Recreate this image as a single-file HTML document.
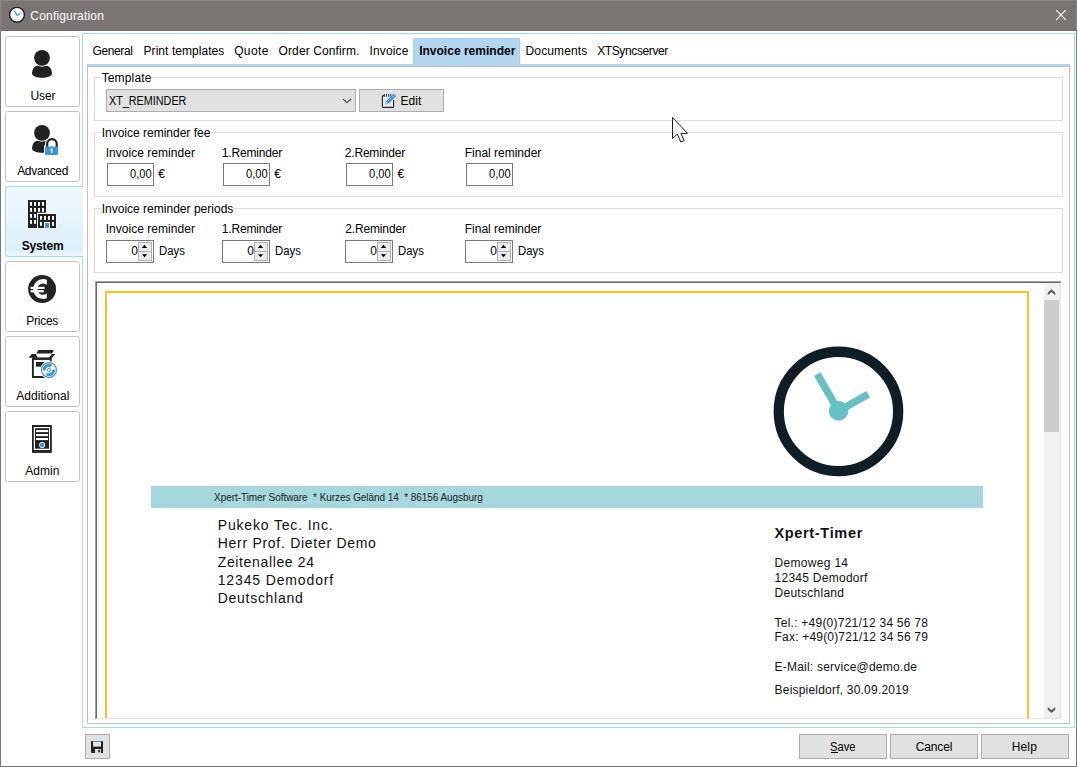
<!DOCTYPE html>
<html><head><meta charset="utf-8"><title>Configuration</title>
<style>
html,body{margin:0;padding:0;}
body{width:1077px;height:767px;overflow:hidden;background:#fff;position:relative;font-family:"Liberation Sans", sans-serif;}
.a{position:absolute;box-sizing:border-box;}
.t{position:absolute;white-space:pre;font-family:"Liberation Sans", sans-serif;}
.sb{position:absolute;box-sizing:border-box;left:5px;width:75px;height:71px;border:1px solid #c4c4c4;border-radius:2.5px;background:#fff;}
.gb{position:absolute;box-sizing:border-box;border:1px solid #dcdcdc;}
.btn{position:absolute;box-sizing:border-box;background:#e1e1e1;border:1px solid #adadad;}
.inp{position:absolute;box-sizing:border-box;background:#fff;border:1px solid #7a7a7a;}
.spb{position:absolute;box-sizing:border-box;background:#ebebeb;border:1px solid #b2b2b2;}
svg{position:absolute;overflow:visible;}
</style></head>
<body>
<div class="a" style="left:0;top:0;width:1077px;height:31px;background:#7a7473;"></div>
<div class="a" style="left:0;top:30px;width:1077px;height:1px;background:#6f6968;"></div>
<div class="a" style="left:0;top:0;width:1px;height:767px;background:#7d7877;"></div>
<div class="a" style="left:1076px;top:0;width:1px;height:767px;background:#7d7877;"></div>
<div class="a" style="left:0;top:766px;width:1077px;height:1px;background:#7d7877;"></div>
<div class="a" style="left:0;top:0;width:1077px;height:1px;background:#898483;"></div>
<div class="a" style="left:0;top:0;width:1px;height:31px;background:#898483;"></div>
<div class="a" style="left:1076px;top:0;width:1px;height:31px;background:#898483;"></div>
<svg style="left:0;top:0" width="40" height="31" viewBox="0 0 40 31">
<circle cx="17" cy="14.8" r="7.4" fill="#fff" stroke="#13242b" stroke-width="1.4"/>
<path d="M14.3 10.6 L16.9 15.4 L20.6 13.4" fill="none" stroke="#3fb2b5" stroke-width="1.3"/>
</svg>
<svg style="left:1051px;top:5px" width="20" height="20" viewBox="0 0 20 20">
<path d="M5.2 5.2 L14.8 14.8 M14.8 5.2 L5.2 14.8" stroke="#fff" stroke-width="1.15" fill="none"/></svg>
<div class="a" style="left:82px;top:33px;width:993px;height:695px;border:1px solid #9bdcfb;"></div>
<div class="a" style="left:87px;top:66px;width:983px;height:658px;border:1px solid #bfbfbf;"></div>
<div class="a" style="left:87px;top:64px;width:983px;height:2px;background:#b2d6f0;"></div>
<div class="a" style="left:413px;top:38px;width:107px;height:27px;background:#b2d6f0;border:1px solid #a9d1ee;border-bottom:none;"></div>
<div class="sb" style="top:36px;"></div>
<div class="sb" style="top:111px;"></div>
<div class="a" style="left:5px;top:186px;width:78px;height:71px;border:1px solid #9bdcfb;border-right:none;border-radius:3px 0 0 3px;background:linear-gradient(#eef8fe 0%,#e6f4fd 45%,#dbeffb 92%,#e8f5fd 96%);box-shadow:inset 1px 1px 0 rgba(255,255,255,.7), inset 0 -1px 0 rgba(255,255,255,.3);"></div>
<div class="sb" style="top:261px;"></div>
<div class="sb" style="top:336px;"></div>
<div class="sb" style="top:411px;"></div>
<div class="gb" style="left:94px;top:77px;width:969px;height:44px;"></div>
<div class="a" style="left:101px;top:77px;width:51px;height:1px;background:#fff;"></div>
<div class="gb" style="left:94px;top:132px;width:969px;height:65px;"></div>
<div class="a" style="left:101px;top:132px;width:110px;height:1px;background:#fff;"></div>
<div class="gb" style="left:94px;top:208px;width:969px;height:65px;"></div>
<div class="a" style="left:101px;top:208px;width:133px;height:1px;background:#fff;"></div>
<div class="btn" style="left:106px;top:89px;width:250px;height:23px;"></div>
<svg style="left:340px;top:94px" width="14" height="12" viewBox="0 0 14 12"><path d="M3 5 L7 8.6 L11 5" fill="none" stroke="#404040" stroke-width="1.15"/></svg>
<div class="btn" style="left:359px;top:89px;width:85px;height:23px;"></div>
<div class="inp" style="left:107px;top:163px;width:47px;height:23px;"></div>
<div class="inp" style="left:223px;top:163px;width:47px;height:23px;"></div>
<div class="inp" style="left:346px;top:163px;width:47px;height:23px;"></div>
<div class="inp" style="left:466px;top:163px;width:47px;height:23px;"></div>
<div class="inp" style="left:106px;top:240px;width:48px;height:23px;"></div>
<div class="spb" style="left:138px;top:242px;width:14px;height:10px;"></div>
<div class="spb" style="left:138px;top:251px;width:14px;height:10px;"></div>
<svg style="left:138px;top:242px" width="14" height="19" viewBox="0 0 14 19"><path d="M3.9 5.9 L6.5 2.8 L9.1 5.9 Z M3.9 12.2 L6.5 15.3 L9.1 12.2 Z" fill="#000"/></svg>
<div class="inp" style="left:222px;top:240px;width:48px;height:23px;"></div>
<div class="spb" style="left:254px;top:242px;width:14px;height:10px;"></div>
<div class="spb" style="left:254px;top:251px;width:14px;height:10px;"></div>
<svg style="left:254px;top:242px" width="14" height="19" viewBox="0 0 14 19"><path d="M3.9 5.9 L6.5 2.8 L9.1 5.9 Z M3.9 12.2 L6.5 15.3 L9.1 12.2 Z" fill="#000"/></svg>
<div class="inp" style="left:345px;top:240px;width:48px;height:23px;"></div>
<div class="spb" style="left:377px;top:242px;width:14px;height:10px;"></div>
<div class="spb" style="left:377px;top:251px;width:14px;height:10px;"></div>
<svg style="left:377px;top:242px" width="14" height="19" viewBox="0 0 14 19"><path d="M3.9 5.9 L6.5 2.8 L9.1 5.9 Z M3.9 12.2 L6.5 15.3 L9.1 12.2 Z" fill="#000"/></svg>
<div class="inp" style="left:465px;top:240px;width:48px;height:23px;"></div>
<div class="spb" style="left:497px;top:242px;width:14px;height:10px;"></div>
<div class="spb" style="left:497px;top:251px;width:14px;height:10px;"></div>
<svg style="left:497px;top:242px" width="14" height="19" viewBox="0 0 14 19"><path d="M3.9 5.9 L6.5 2.8 L9.1 5.9 Z M3.9 12.2 L6.5 15.3 L9.1 12.2 Z" fill="#000"/></svg>
<div class="a" style="left:95px;top:281px;width:966px;height:438px;background:#fff;border-top:2px solid #696969;border-left:2px solid #696969;border-right:1px solid #e3e3e3;border-bottom:1px solid #e3e3e3;"></div>
<div class="a" style="left:95px;top:281px;width:965px;height:1px;background:#a0a0a0;"></div>
<div class="a" style="left:95px;top:281px;width:1px;height:437px;background:#a0a0a0;"></div>
<div class="a" style="left:105px;top:291px;width:924px;height:427px;border:2px solid #ffc125;border-bottom:none;"></div>
<div class="a" style="left:1044px;top:283px;width:16px;height:435px;background:#f0f0f0;"></div>
<div class="a" style="left:1044px;top:300px;width:15px;height:132px;background:#cdcdcd;"></div>
<svg style="left:0;top:0" width="1077" height="767" viewBox="0 0 1077 767">
<path d="M1047.8 295.2 L1051.5 292 L1055.2 295.2 V292.4 L1051.5 289.2 L1047.8 292.4 Z" fill="#5a5a5a"/>
<path d="M1047.8 707 L1051.5 710.3 L1055.2 707 V709.8 L1051.5 713 L1047.8 709.8 Z" fill="#5a5a5a"/>
</svg>
<div class="a" style="left:151px;top:486px;width:832px;height:22px;background:#a5d7de;"></div>
<svg style="left:760px;top:335px" width="160" height="150" viewBox="760 335 160 150">
<circle cx="838.45" cy="411.45" r="59.7" fill="#fff" stroke="#0f1e26" stroke-width="10.3"/>
<path d="M838.6 410.9 L817.3 374.1" stroke="#66c1c4" stroke-width="7.5" fill="none"/>
<path d="M838.6 410.9 L868.2 394.3" stroke="#66c1c4" stroke-width="7.5" fill="none"/>
<circle cx="838.6" cy="410.9" r="9.8" fill="#66c1c4"/>
</svg>
<div class="btn" style="left:85px;top:734px;width:25px;height:25px;"></div>
<div class="btn" style="left:799px;top:734px;width:88px;height:25px;"></div>
<div class="btn" style="left:890px;top:734px;width:88px;height:25px;"></div>
<div class="btn" style="left:981px;top:734px;width:88px;height:25px;"></div>
<div class="a" style="left:831px;top:752px;width:7px;height:1px;background:#000;"></div>
<svg style="left:0;top:0" width="1077" height="767" viewBox="0 0 1077 767">
<!-- User icon -->
<g id="user">
<path d="M36.8 65.8 L47.2 65.8 C50 66.6 52 70 52 73.6 C52 76.6 46 77.8 42 77.8 C38 77.8 32 76.6 32 73.6 C32 70 34 66.6 36.8 65.8 Z" fill="#222"/>
<circle cx="42" cy="57.8" r="8.9" fill="#fff"/>
<circle cx="42" cy="57.8" r="7.9" fill="#222"/>
</g>
<!-- Advanced icon -->
<g id="adv">
<path d="M36.8 140.8 L47.2 140.8 C50 141.6 52 145 52 148.6 C52 151.6 46 152.8 42 152.8 C38 152.8 32 151.6 32 148.6 C32 145 34 141.6 36.8 140.8 Z" fill="#222"/>
<path d="M47.2 148 V143.8 A4.75 4.75 0 0 1 56.7 143.8 V148" fill="#fff" stroke="#fff" stroke-width="4.4"/>
<rect x="44" y="145.4" width="15.2" height="10.6" fill="#fff"/>
<circle cx="42" cy="132.8" r="8.9" fill="#fff"/>
<circle cx="42" cy="132.8" r="7.9" fill="#222"/>
<path d="M47.2 147 V143.8 A4.75 4.75 0 0 1 56.7 143.8 V147" fill="none" stroke="#222" stroke-width="2.2"/>
<rect x="45.1" y="146.5" width="12.9" height="8.4" rx="0.8" fill="#3b97d3"/>
<circle cx="51.6" cy="149.4" r="1" fill="#fff"/>
<rect x="50.9" y="149.4" width="1.4" height="3.6" fill="#fff"/>
</g>
<!-- System icon -->
<g id="sys">
<path d="M27.3 199.3 H46.8 V213.3 H56.7 V228.7 H27.3 Z" fill="#f4fafe"/>
<path d="M28 200 H46 V212.8 H37 V228 H28 Z" fill="#222"/>
<path d="M38 214 H56 V228 H50 V222 H44 V228 H38 Z" fill="#222"/>
<g fill="#fff">
<rect x="30" y="202" width="2" height="3.8"/><rect x="34" y="202" width="2" height="3.8"/><rect x="38" y="202" width="2" height="3.8"/><rect x="42" y="202" width="2" height="3.8"/>
<rect x="30" y="208" width="2" height="3.8"/><rect x="34" y="208" width="2" height="3.8"/><rect x="38" y="208" width="2" height="3.8"/><rect x="42" y="208" width="2" height="3.8"/>
<rect x="30" y="214" width="2" height="3.8"/><rect x="34" y="214" width="2" height="3.8"/>
<rect x="30" y="220" width="2" height="3.8"/><rect x="34" y="220" width="2" height="3.8"/>
<rect x="40" y="216" width="2" height="3.8"/><rect x="44" y="216" width="2" height="3.8"/><rect x="48" y="216" width="2" height="3.8"/><rect x="52" y="216" width="2" height="3.8"/>
<rect x="40" y="222" width="2" height="3.8"/><rect x="52" y="222" width="2" height="3.8"/>
</g>
<rect x="45.1" y="223" width="3.9" height="5" fill="#3b97d3"/>
</g>
<!-- Prices icon -->
<g id="price">
<circle cx="42.1" cy="289.1" r="14" fill="#222"/>
<clipPath id="eclip"><rect x="28" y="275" width="18.8" height="28"/></clipPath>
<circle cx="43.1" cy="289.1" r="7.85" fill="none" stroke="#fff" stroke-width="4.3" clip-path="url(#eclip)"/>
<rect x="30.6" y="286.8" width="14" height="2.2" fill="#fff"/>
<rect x="30.6" y="290.1" width="13.2" height="2.2" fill="#fff"/>
</g>
<!-- Additional icon -->
<g id="addl">
<path d="M38.4 350 H53.8 L52.1 353.6 H36.1 Z" fill="#222"/>
<path d="M28.6 357.8 L31.8 354 H35.8 L37.8 357.8 Z" fill="#222"/>
<path d="M52 354 H55.3 L51.6 358.2 H48.1 Z" fill="#222"/>
<path d="M32.9 358.8 H50.7 V377 H32.9 Z" fill="#fff" stroke="#222" stroke-width="1.9"/>
<rect x="32" y="357.6" width="19.6" height="2.2" fill="#222"/>
<rect x="36" y="362" width="8" height="4.7" fill="#222"/>
<circle cx="49" cy="370" r="8.9" fill="#fff"/>
<circle cx="49" cy="370" r="7.45" fill="#fff" stroke="#3b97d3" stroke-width="1.15"/>
<path d="M44.32 370.41 A4.7 4.7 0 0 1 51.35 365.93" fill="none" stroke="#3b97d3" stroke-width="2.8"/>
<path d="M53.68 369.59 A4.7 4.7 0 0 1 46.65 374.07" fill="none" stroke="#3b97d3" stroke-width="2.8"/>
<circle cx="49" cy="370" r="1.6" fill="#fff" stroke="#3b97d3" stroke-width="0.9"/>
</g>
<!-- Admin icon -->
<g id="admin">
<rect x="32" y="425" width="19.8" height="27.9" fill="#222"/>
<rect x="33.8" y="427" width="16.2" height="23" fill="#fff"/>
<rect x="35" y="428.2" width="14" height="20.5" fill="#222"/>
<rect x="36" y="430" width="12.1" height="2.1" fill="#fff"/>
<rect x="36" y="434" width="12.1" height="2.1" fill="#fff"/>
<rect x="36" y="438" width="12.1" height="2.1" fill="#fff"/>
<circle cx="42.1" cy="444.9" r="3" fill="#fff"/>
<circle cx="42.1" cy="444.9" r="2.2" fill="#3b97d3"/>
</g>
<!-- Edit icon -->
<g id="edit">
<path d="M384 95.6 H383.4 Q382.4 95.6 382.4 96.6 V106.4 Q382.4 107.4 383.4 107.4 H392.6 Q393.6 107.4 393.6 106.4 V100" fill="#ececec" stroke="#222" stroke-width="1.1"/>
<path d="M384.4 94 V96.8 M386.5 94 V96.8 M388.6 94 V96.8 M390.6 94 V96.4" stroke="#222" stroke-width="0.9" fill="none"/>
<path d="M385.1 104.6 L386.2 101 L393.6 93.4 L396.3 96 L388.8 103.5 Z" fill="#3b97d3"/>
<path d="M391.7 95.4 L394.3 97.9" stroke="#e4e4e4" stroke-width="0.6"/>
<path d="M388.3 100.8 L390.9 98.2" stroke="#d8ecf8" stroke-width="0.6" stroke-dasharray="0.9 0.6"/>
<path d="M386.4 102 L387.9 103.4 L385.9 104.1 Z" fill="#cfe6f5"/>
<rect x="394" y="94.6" width="0.9" height="0.9" fill="#e0eef8" transform="rotate(45 394.4 95)"/>
</g>
<!-- Floppy icon -->
<g id="floppy">
<rect x="91" y="741" width="12" height="12" rx="0.8" fill="#222"/>
<rect x="93" y="741" width="8" height="5.6" fill="#e4e4e4"/>
<rect x="93.4" y="741" width="7.2" height="1" fill="#3b97d3"/>
<rect x="95" y="749" width="6" height="4" fill="#e1e1e1"/>
<rect x="98.2" y="749.7" width="1.8" height="2.6" fill="#222"/>
</g>
<!-- Mouse cursor -->
<path d="M672.5 117.5 L672.5 138.5 L677.3 134 L680.8 142 L684.2 140.5 L680.9 133.4 L687.5 133.4 Z" fill="#fff" stroke="#1b1b2b" stroke-width="1" stroke-linejoin="miter"/>
</svg>

<div class="t" style="left:30.36px;top:9.00px;font-size:12px;line-height:14px;font-weight:400;color:#ffffff;letter-spacing:0.176px;">Configuration</div>
<div class="t" style="left:92.56px;top:44.00px;font-size:12px;line-height:14px;font-weight:400;color:#000;letter-spacing:-0.384px;">General</div>
<div class="t" style="left:143.56px;top:44.00px;font-size:12px;line-height:14px;font-weight:400;color:#000;letter-spacing:0.054px;">Print templates</div>
<div class="t" style="left:234.16px;top:44.00px;font-size:12px;line-height:14px;font-weight:400;color:#000;letter-spacing:0.374px;">Quote</div>
<div class="t" style="left:278.56px;top:44.00px;font-size:12px;line-height:14px;font-weight:400;color:#000;letter-spacing:0.111px;">Order Confirm.</div>
<div class="t" style="left:369.56px;top:44.00px;font-size:12px;line-height:14px;font-weight:400;color:#000;letter-spacing:0.128px;">Invoice</div>
<div class="t" style="left:419.16px;top:44.00px;font-size:12px;line-height:14px;font-weight:700;color:#000;letter-spacing:0.010px;">Invoice reminder</div>
<div class="t" style="left:525.56px;top:44.00px;font-size:12px;line-height:14px;font-weight:400;color:#000;letter-spacing:0.137px;">Documents</div>
<div class="t" style="left:597.16px;top:44.00px;font-size:12px;line-height:14px;font-weight:400;color:#000;letter-spacing:-0.378px;">XTSyncserver</div>
<div class="t" style="left:101.66px;top:71.00px;font-size:12px;line-height:14px;font-weight:400;color:#000;letter-spacing:0.142px;">Template</div>
<div class="t" style="left:101.66px;top:126.00px;font-size:12px;line-height:14px;font-weight:400;color:#000;letter-spacing:-0.002px;">Invoice reminder fee</div>
<div class="t" style="left:101.66px;top:202.00px;font-size:12px;line-height:14px;font-weight:400;color:#000;letter-spacing:0.013px;">Invoice reminder periods</div>
<div class="t" style="left:109.16px;top:94.00px;font-size:12px;line-height:14px;font-weight:400;color:#000;letter-spacing:0.000px;transform:scaleX(0.8998);transform-origin:0 0;">XT_REMINDER</div>
<div class="t" style="left:400.46px;top:94.00px;font-size:12px;line-height:14px;font-weight:400;color:#000;letter-spacing:0.071px;">Edit</div>
<div class="t" style="left:105.66px;top:146.00px;font-size:12px;line-height:14px;font-weight:400;color:#000;letter-spacing:0.039px;">Invoice reminder</div>
<div class="t" style="left:221.76px;top:146.00px;font-size:12px;line-height:14px;font-weight:400;color:#000;letter-spacing:-0.159px;">1.Reminder</div>
<div class="t" style="left:344.76px;top:146.00px;font-size:12px;line-height:14px;font-weight:400;color:#000;letter-spacing:-0.181px;">2.Reminder</div>
<div class="t" style="left:464.76px;top:146.00px;font-size:12px;line-height:14px;font-weight:400;color:#000;letter-spacing:-0.008px;">Final reminder</div>
<div class="t" style="left:105.66px;top:222.00px;font-size:12px;line-height:14px;font-weight:400;color:#000;letter-spacing:0.039px;">Invoice reminder</div>
<div class="t" style="left:221.76px;top:222.00px;font-size:12px;line-height:14px;font-weight:400;color:#000;letter-spacing:-0.159px;">1.Reminder</div>
<div class="t" style="left:345.16px;top:222.00px;font-size:12px;line-height:14px;font-weight:400;color:#000;letter-spacing:-0.137px;">2.Reminder</div>
<div class="t" style="left:464.76px;top:222.00px;font-size:12px;line-height:14px;font-weight:400;color:#000;letter-spacing:-0.008px;">Final reminder</div>
<div class="t" style="left:129.56px;top:167.00px;font-size:12px;line-height:14px;font-weight:400;color:#000;letter-spacing:0.000px;transform:scaleX(0.9247);transform-origin:0 0;">0,00</div>
<div class="t" style="left:245.56px;top:167.00px;font-size:12px;line-height:14px;font-weight:400;color:#000;letter-spacing:0.000px;transform:scaleX(0.9247);transform-origin:0 0;">0,00</div>
<div class="t" style="left:368.56px;top:167.00px;font-size:12px;line-height:14px;font-weight:400;color:#000;letter-spacing:0.000px;transform:scaleX(0.9247);transform-origin:0 0;">0,00</div>
<div class="t" style="left:488.56px;top:167.00px;font-size:12px;line-height:14px;font-weight:400;color:#000;letter-spacing:0.000px;transform:scaleX(0.9247);transform-origin:0 0;">0,00</div>
<div class="t" style="left:158.16px;top:167.00px;font-size:12px;line-height:14px;font-weight:400;color:#000;letter-spacing:0.000px;">€</div>
<div class="t" style="left:274.16px;top:167.00px;font-size:12px;line-height:14px;font-weight:400;color:#000;letter-spacing:0.000px;">€</div>
<div class="t" style="left:397.46px;top:167.00px;font-size:12px;line-height:14px;font-weight:400;color:#000;letter-spacing:0.000px;">€</div>
<div class="t" style="left:131.16px;top:244.00px;font-size:12px;line-height:14px;font-weight:400;color:#000;letter-spacing:0.000px;">0</div>
<div class="t" style="left:247.16px;top:244.00px;font-size:12px;line-height:14px;font-weight:400;color:#000;letter-spacing:0.000px;">0</div>
<div class="t" style="left:370.16px;top:244.00px;font-size:12px;line-height:14px;font-weight:400;color:#000;letter-spacing:0.000px;">0</div>
<div class="t" style="left:490.16px;top:244.00px;font-size:12px;line-height:14px;font-weight:400;color:#000;letter-spacing:0.000px;">0</div>
<div class="t" style="left:158.76px;top:244.00px;font-size:12px;line-height:14px;font-weight:400;color:#000;letter-spacing:0.000px;transform:scaleX(0.9435);transform-origin:0 0;">Days</div>
<div class="t" style="left:274.76px;top:244.00px;font-size:12px;line-height:14px;font-weight:400;color:#000;letter-spacing:0.000px;transform:scaleX(0.9435);transform-origin:0 0;">Days</div>
<div class="t" style="left:398.36px;top:244.00px;font-size:12px;line-height:14px;font-weight:400;color:#000;letter-spacing:0.000px;transform:scaleX(0.9435);transform-origin:0 0;">Days</div>
<div class="t" style="left:517.56px;top:244.00px;font-size:12px;line-height:14px;font-weight:400;color:#000;letter-spacing:0.000px;transform:scaleX(0.9435);transform-origin:0 0;">Days</div>
<div class="t" style="left:30.56px;top:89.00px;font-size:12px;line-height:14px;font-weight:400;color:#000;letter-spacing:-0.115px;">User</div>
<div class="t" style="left:17.16px;top:164.00px;font-size:12px;line-height:14px;font-weight:400;color:#000;letter-spacing:-0.311px;">Advanced</div>
<div class="t" style="left:21.76px;top:239.00px;font-size:12px;line-height:14px;font-weight:700;color:#000;letter-spacing:-0.161px;">System</div>
<div class="t" style="left:26.16px;top:314.00px;font-size:12px;line-height:14px;font-weight:400;color:#000;letter-spacing:-0.229px;">Prices</div>
<div class="t" style="left:16.16px;top:389.00px;font-size:12px;line-height:14px;font-weight:400;color:#000;letter-spacing:0.053px;">Additional</div>
<div class="t" style="left:25.16px;top:464.00px;font-size:12px;line-height:14px;font-weight:400;color:#000;letter-spacing:0.046px;">Admin</div>
<div class="t" style="left:830.46px;top:740.00px;font-size:12px;line-height:14px;font-weight:400;color:#000;letter-spacing:0.000px;transform:scaleX(0.9284);transform-origin:0 0;">Save</div>
<div class="t" style="left:915.76px;top:740.00px;font-size:12px;line-height:14px;font-weight:400;color:#000;letter-spacing:-0.152px;">Cancel</div>
<div class="t" style="left:1011.66px;top:740.00px;font-size:12px;line-height:14px;font-weight:400;color:#000;letter-spacing:0.171px;">Help</div>
<div class="t" style="left:214.10px;top:491.50px;font-size:10px;line-height:12px;font-weight:400;color:#222;letter-spacing:-0.056px;">Xpert-Timer Software  * Kurzes Geländ 14  * 86156 Augsburg</div>
<div class="t" style="left:217.72px;top:517.40px;font-size:14px;line-height:16px;font-weight:400;color:#111;letter-spacing:0.835px;">Pukeko Tec. Inc.</div>
<div class="t" style="left:217.72px;top:535.40px;font-size:14px;line-height:16px;font-weight:400;color:#111;letter-spacing:0.716px;">Herr Prof. Dieter Demo</div>
<div class="t" style="left:217.72px;top:553.60px;font-size:14px;line-height:16px;font-weight:400;color:#111;letter-spacing:0.642px;">Zeitenallee 24</div>
<div class="t" style="left:217.72px;top:571.70px;font-size:14px;line-height:16px;font-weight:400;color:#111;letter-spacing:0.862px;">12345 Demodorf</div>
<div class="t" style="left:217.72px;top:589.80px;font-size:14px;line-height:16px;font-weight:400;color:#111;letter-spacing:0.717px;">Deutschland</div>
<div class="t" style="left:774.38px;top:524.90px;font-size:14.5px;line-height:17px;font-weight:700;color:#111;letter-spacing:0.683px;">Xpert-Timer</div>
<div class="t" style="left:774.56px;top:556.00px;font-size:12px;line-height:14px;font-weight:400;color:#111;letter-spacing:0.309px;">Demoweg 14</div>
<div class="t" style="left:774.56px;top:571.00px;font-size:12px;line-height:14px;font-weight:400;color:#111;letter-spacing:0.262px;">12345 Demodorf</div>
<div class="t" style="left:774.56px;top:586.00px;font-size:12px;line-height:14px;font-weight:400;color:#111;letter-spacing:0.268px;">Deutschland</div>
<div class="t" style="left:774.56px;top:616.00px;font-size:12px;line-height:14px;font-weight:400;color:#111;letter-spacing:0.238px;">Tel.: +49(0)721/12 34 56 78</div>
<div class="t" style="left:774.56px;top:630.00px;font-size:12px;line-height:14px;font-weight:400;color:#111;letter-spacing:0.194px;">Fax: +49(0)721/12 34 56 79</div>
<div class="t" style="left:774.56px;top:660.00px;font-size:12px;line-height:14px;font-weight:400;color:#111;letter-spacing:0.220px;">E-Mail: service@demo.de</div>
<div class="t" style="left:774.56px;top:683.00px;font-size:12px;line-height:14px;font-weight:400;color:#111;letter-spacing:0.207px;">Beispieldorf, 30.09.2019</div>
</body></html>
